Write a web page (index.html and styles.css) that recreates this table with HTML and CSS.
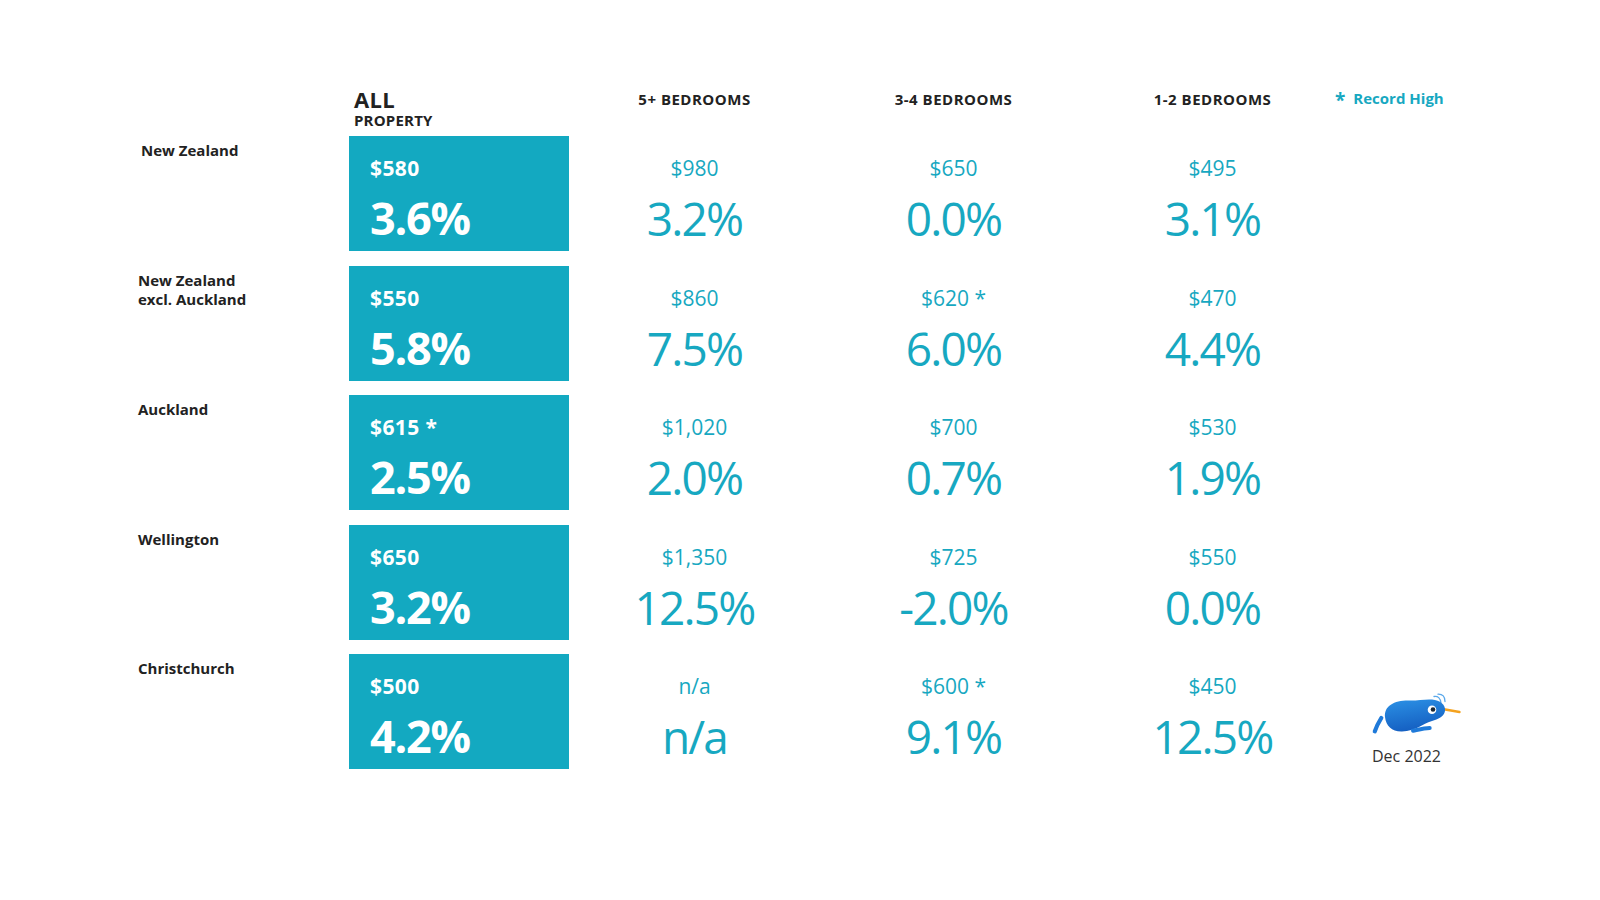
FILE: index.html
```html
<!DOCTYPE html>
<html lang="en">
<head>
<meta charset="utf-8">
<title>Rents</title>
<link rel="stylesheet" href="styles.css">
</head>
<body>
<div class="page">
  <div class="grid head">
    <div></div>
    <div class="h-all"><div class="all">ALL</div><div class="prop">PROPERTY</div></div>
    <div class="h-col">5+ BEDROOMS</div>
    <div class="h-col">3-4 BEDROOMS</div>
    <div class="h-col">1-2 BEDROOMS</div>
    <div class="legend"><span class="star">*</span>Record High</div>
  </div>
  <div class="grid body">
    <div class="label indent">New Zealand</div>
    <div class="box"><div class="sm">$580</div><div class="lg">3.6%</div></div>
    <div class="cell"><div class="sm">$980</div><div class="lg">3.2%</div></div>
    <div class="cell"><div class="sm">$650</div><div class="lg">0.0%</div></div>
    <div class="cell"><div class="sm">$495</div><div class="lg">3.1%</div></div>
    <div></div>

    <div class="label">New Zealand<br>excl. Auckland</div>
    <div class="box"><div class="sm">$550</div><div class="lg">5.8%</div></div>
    <div class="cell"><div class="sm">$860</div><div class="lg">7.5%</div></div>
    <div class="cell"><div class="sm">$620 *</div><div class="lg">6.0%</div></div>
    <div class="cell"><div class="sm">$470</div><div class="lg">4.4%</div></div>
    <div></div>

    <div class="label">Auckland</div>
    <div class="box"><div class="sm">$615 *</div><div class="lg">2.5%</div></div>
    <div class="cell"><div class="sm">$1,020</div><div class="lg">2.0%</div></div>
    <div class="cell"><div class="sm">$700</div><div class="lg">0.7%</div></div>
    <div class="cell"><div class="sm">$530</div><div class="lg">1.9%</div></div>
    <div></div>

    <div class="label">Wellington</div>
    <div class="box"><div class="sm">$650</div><div class="lg">3.2%</div></div>
    <div class="cell"><div class="sm">$1,350</div><div class="lg">12.5%</div></div>
    <div class="cell"><div class="sm">$725</div><div class="lg">-2.0%</div></div>
    <div class="cell"><div class="sm">$550</div><div class="lg">0.0%</div></div>
    <div></div>

    <div class="label">Christchurch</div>
    <div class="box"><div class="sm">$500</div><div class="lg">4.2%</div></div>
    <div class="cell"><div class="sm">n/a</div><div class="lg">n/a</div></div>
    <div class="cell"><div class="sm">$600 *</div><div class="lg">9.1%</div></div>
    <div class="cell"><div class="sm">$450</div><div class="lg">12.5%</div></div>
    <div class="kiwi-cell">
      <svg class="kiwi" width="90" height="45" viewBox="0 0 90 45" aria-hidden="true">
        <defs>
          <linearGradient id="kg" x1="0" y1="0" x2="0.3" y2="1">
            <stop offset="0" stop-color="#2c92e6"/>
            <stop offset="1" stop-color="#1560c2"/>
          </linearGradient>
        </defs>
        <path d="M62 3.5 Q68 2.5 69 10" fill="none" stroke="#5aa8ea" stroke-width="1.3" stroke-linecap="round"/>
        <path d="M66 1.2 Q73 1 73 8.5" fill="none" stroke="#5aa8ea" stroke-width="1.3" stroke-linecap="round"/>
        <line x1="69" y1="15.8" x2="87.5" y2="19" stroke="#f4a21f" stroke-width="2.4" stroke-linecap="round"/>
        <path d="M13 24 C12 13 22 7.5 36 7.5 C46 7.8 52 6 60 6.5 C68 7 74 12 73 18 C72 24 66 26 60 28 C50 31 44 38 30 38.5 C20 38.8 14 33 13 24 Z" fill="url(#kg)"/>
        <path d="M9.3 25 C6.5 29.5 4.2 34 2.8 38.3" fill="none" stroke="#1f7ad9" stroke-width="4.2" stroke-linecap="round"/>
        <path d="M41 37.7 C47 36.5 52 35.2 57.7 35" fill="none" stroke="#1f7ad9" stroke-width="4" stroke-linecap="round"/>
        <circle cx="60" cy="16.7" r="4.3" fill="#ffffff"/>
        <circle cx="61" cy="16.5" r="2.3" fill="#1b2733"/>
      </svg>
      <div class="date">Dec 2022</div>
    </div>
  </div>
</div>
</body>
</html>
```
FILE: styles.css
```css
html, body {
  margin: 0;
  padding: 0;
  background: #ffffff;
}
body {
  font-family: "Open Sans", "Noto Sans", "Liberation Sans", sans-serif;
  color: #222222;
  width: 1600px;
  height: 900px;
  overflow: hidden;
}
.page {
  padding: 87px 0 0 138px;
}
.grid {
  display: grid;
  grid-template-columns: 211px 216px 259px 259px 259px 128px;
}
.head {
  margin-bottom: 6px;
  align-items: start;
}
.h-all {
  padding-left: 5px;
  font-weight: 700;
}
.all {
  font-size: 22px;
  line-height: 24px;
  letter-spacing: 0.3px;
}
.prop {
  font-size: 15px;
  line-height: 19px;
  letter-spacing: 0.2px;
}
.h-col {
  text-align: center;
  font-size: 15px;
  line-height: 24px;
  font-weight: 700;
  letter-spacing: 0.5px;
}
.legend {
  margin-left: -7px;
  margin-top: -2px;
  font-size: 15px;
  line-height: 24px;
  font-weight: 700;
  color: #17a8c1;
  white-space: nowrap;
}
.star {
  font-size: 19px;
  position: relative;
  top: 3px;
  margin-right: 8px;
}
.body {
  grid-auto-rows: 115px;
  row-gap: 14.5px;
}
.label {
  font-size: 15px;
  line-height: 19.5px;
  font-weight: 700;
  padding-top: 5px;
  color: #222222;
}
.label.indent {
  padding-left: 3px;
}
.box {
  width: 220px;
  background: #13a9c1;
  color: #ffffff;
  font-weight: 700;
  padding: 20px 0 0 21px;
  box-sizing: border-box;
}
.box .sm {
  font-size: 21px;
  line-height: 24px;
  letter-spacing: 0.4px;
}
.box .lg {
  font-size: 45px;
  line-height: 50px;
  margin-top: 13px;
  letter-spacing: -1.3px;
}
.cell {
  text-align: center;
  color: #17a8c1;
  padding-top: 20px;
}
.cell .sm {
  font-size: 21px;
  line-height: 24px;
}
.cell .lg {
  font-size: 46px;
  line-height: 50px;
  margin-top: 13px;
  letter-spacing: -1.8px;
}
.kiwi-cell {
  padding: 39px 0 0 30px;
}
.kiwi {
  display: block;
}
.date {
  margin-top: 8px;
  font-size: 16px;
  line-height: 20px;
  color: #333333;
  white-space: nowrap;
}
```
